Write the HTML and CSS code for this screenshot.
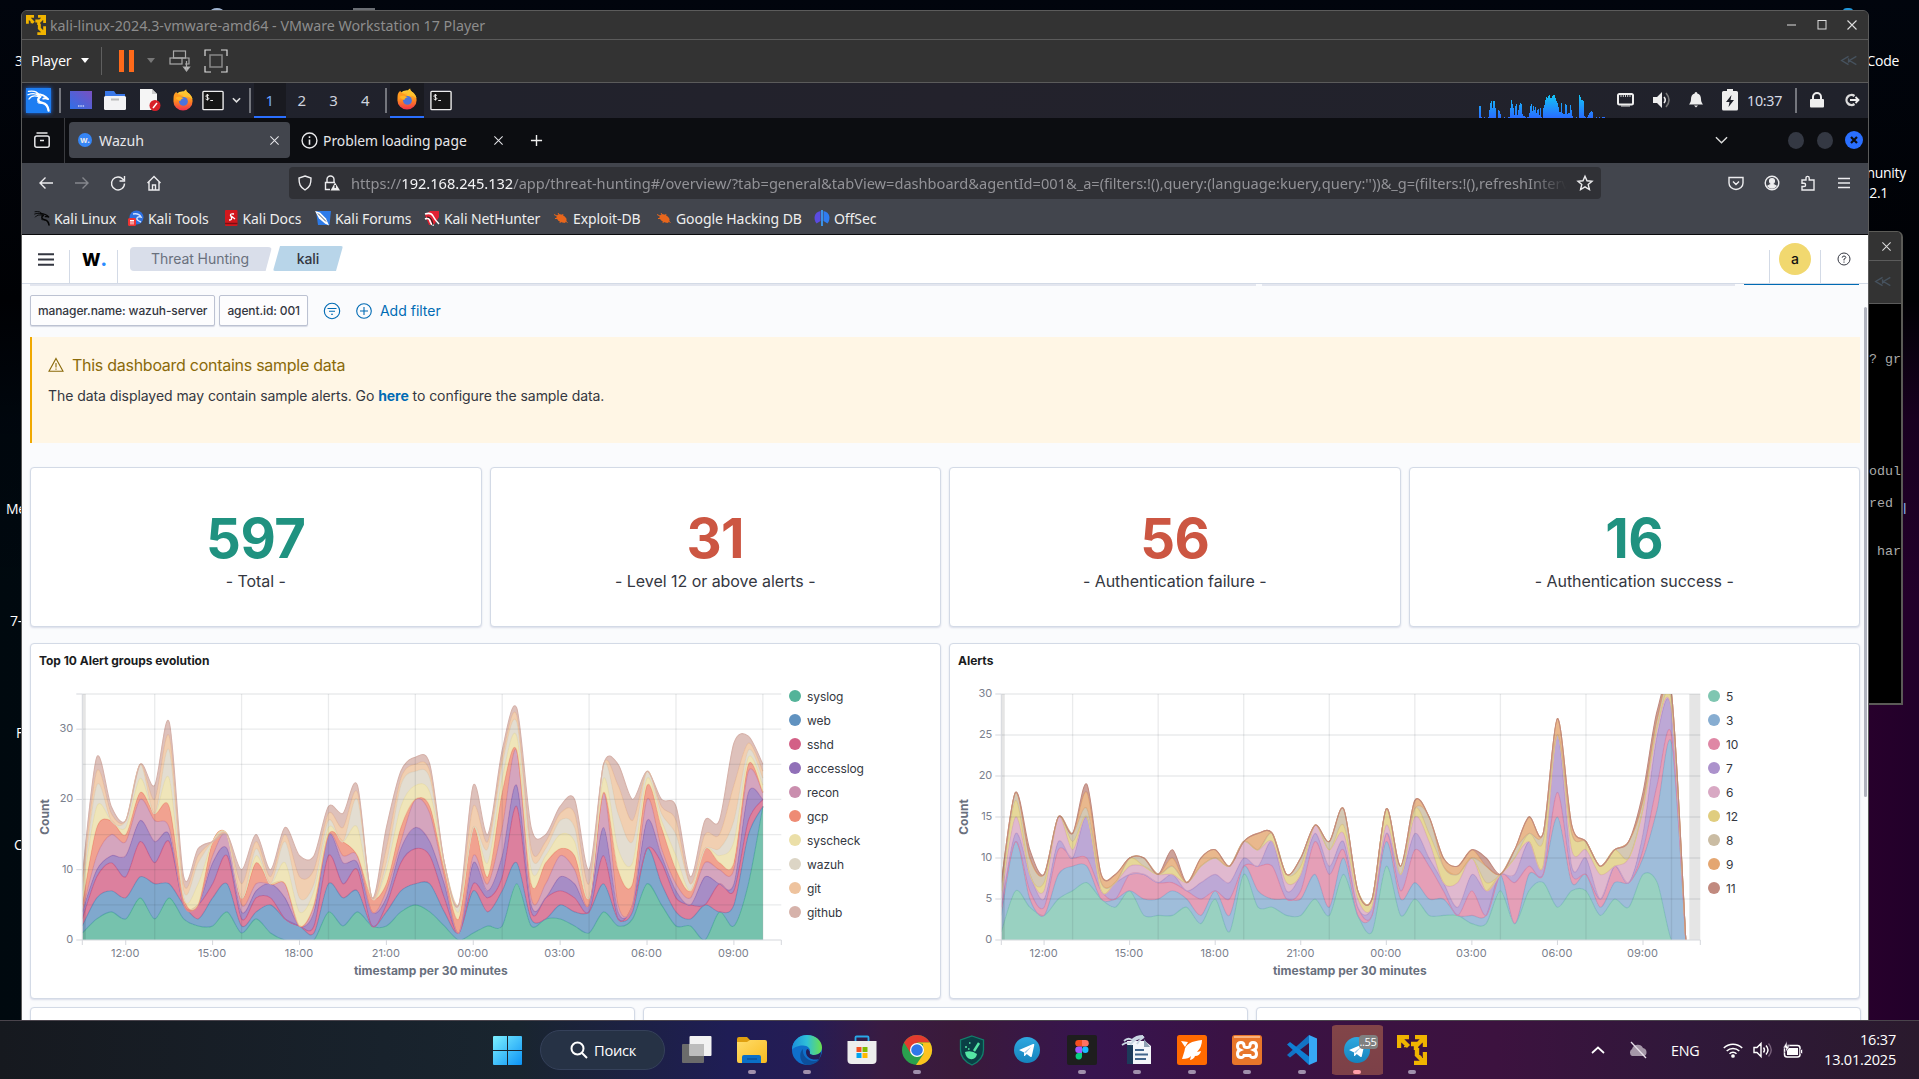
FILE: index.html
```html
<!DOCTYPE html>
<html lang="ru">
<head>
<meta charset="utf-8">
<title>kali-linux-2024.3-vmware-amd64 - VMware Workstation 17 Player</title>
<link rel="stylesheet" href="styles.css">
</head>
<body>
<svg class="defs" aria-hidden="true">
  <defs>
    <linearGradient id="gFox" x1="0" y1="0" x2="0" y2="1"><stop offset="0" stop-color="#ffd43a"/><stop offset=".5" stop-color="#ff8a1f"/><stop offset="1" stop-color="#f0304e"/></linearGradient>
    <linearGradient id="gCpu" x1="0" y1="0" x2="0" y2="24" gradientUnits="userSpaceOnUse"><stop offset="0" stop-color="#12c8f4"/><stop offset="1" stop-color="#2a6cff"/></linearGradient>
    <linearGradient id="gWin" x1="0" y1="0" x2="1" y2="1"><stop offset="0" stop-color="#7cf0ff"/><stop offset="1" stop-color="#0c93f5"/></linearGradient>
    <linearGradient id="gEdge" x1="0" y1="0" x2="1" y2="0"><stop offset="0" stop-color="#1b8fdc"/><stop offset=".5" stop-color="#2fc0d8"/><stop offset="1" stop-color="#6be04c"/></linearGradient>
    <linearGradient id="gTg" x1="0" y1="0" x2="0" y2="1"><stop offset="0" stop-color="#2fa8e0"/><stop offset="1" stop-color="#1583bd"/></linearGradient>
    <linearGradient id="gDesk" x1="0" y1="1" x2="1" y2="0"><stop offset="0" stop-color="#2f6fe8"/><stop offset="1" stop-color="#7a50c0"/></linearGradient>
    <linearGradient id="gFold" x1="0" y1="0" x2="1" y2="1"><stop offset="0" stop-color="#ffdc6a"/><stop offset="1" stop-color="#f8bb1f"/></linearGradient>
  </defs>
  <symbol id="vmware" viewBox="0 0 30 30"><g fill="none" stroke="#f0b400" stroke-width="4.4"><path d="M2 13V2h10M18 2h10v10M28 17v11H17M3 3l8.500 8.500M27 3l-8 8M27 27l-8-8M7 10h3M14 9h5v6M20 13v8"/></g></symbol>
  <symbol id="firefox" viewBox="0 0 24 24"><circle cx="12" cy="13" r="10.5" fill="url(#gFox)"/><path d="M13 9C11 6 12 2 15.500.5c0 4 6 5 7 11-3-3-6-4-9.500-2.500z" fill="#ffc42e"/><path d="M2 12C1 7 3 4 5 3c0 2 1 3 3 3l5 3z" fill="#ff9a20"/><circle cx="12.500" cy="13.500" r="4.800" fill="#4b73dc"/><path d="M4 9.500c3-2 6-1 9 .5-2 0-3 1-4 3-2-.5-4-1.500-5-3.500z" fill="#ffb525"/></symbol>
  <symbol id="terminal" viewBox="0 0 24 22"><rect x="1" y="1" width="22" height="20" rx="1" fill="#161616" stroke="#eee" stroke-width="1.500"/><path d="M7.500 5.500C6 4.500 4 5 4.300 6.400S7.700 7.700 7.500 9 5 10.300 4 9.300M5.900 4v7M9 11h3" fill="none" stroke="#fff" stroke-width="1"/></symbol>
  <symbol id="dragon" viewBox="0 0 24 24"><g fill="none" stroke="currentColor" stroke-linecap="round"><path d="M1.500 2.500C7 1.500 11 3 13 6.500M1 6c5-2 9-1.500 12 1.500M2 10.500C4 7.500 8 6.500 12 8" stroke-width="1.300"/><path d="M10 5.500c6 0 9 1.500 12 5M22 10.500c-2-1-3.500-1-5-.5" stroke-width="2"/><path d="M14 8c-4 3-2.500 5.500 2 6.500s6 4 6.500 8" stroke-width="2.400"/><path d="M16 15c-2-.5-4 .5-5-1" stroke-width="1"/></g></symbol>
  <symbol id="close" viewBox="0 0 12 12"><path d="M1.500 1.500l9 9M10.500 1.500l-9 9" stroke="currentColor" stroke-width="1.100" fill="none"/></symbol>
  <symbol id="rewind" viewBox="0 0 18 12"><path d="M8.500 1.500L1 6l7.500 4.500M8.500 3.500v5M17 1.500L9.500 6l7.500 4.500" fill="none" stroke="#46525e" stroke-width="1.500"/></symbol>
  <symbol id="telegram" viewBox="0 0 26 26"><circle cx="13" cy="13" r="13" fill="url(#gTg)"/><path d="M5 13l14-6c1-.3 1.500.2 1.200 1.200l-2.400 11c-.2.900-.8 1-1.500.6l-3.600-2.700-1.900 1.800c-.5.400-.8.200-.8-.4l.1-3z" fill="#fff"/><path d="M10.200 15.300l7-5.600-5.300 6.300z" fill="#9ac8e4"/></symbol>
  <symbol id="bug" viewBox="0 0 16 16"><ellipse cx="8.500" cy="8.500" rx="5.500" ry="3.600" transform="rotate(30 8.500 8.500)" fill="#e8661c"/><path d="M1 4.500l4 2M5 3l2 3M2 8.500h3M7 13l.5-2M12 13l-1-2M10 4L9 6.500M14.500 12.500l-2-1.500" stroke="#e8661c" stroke-width="1"/></symbol>
</svg>

<div class="desktop">
  <span class="desk-label d1">3</span><span class="desk-label d2">Me</span><span class="desk-label d3">7-</span><span class="desk-label d4">F</span><span class="desk-label d5">C</span>
  <span class="desk-label d6">Code</span><span class="desk-label d7">nunity</span><span class="desk-label d8">.2.1</span><span class="desk-label d9">l</span>
  <i class="peek p1"></i><i class="peek p2"></i><i class="peek p3"></i>

  <section class="window back-window">
    <div class="titlebar"><svg class="i12"><use href="#close"/></svg></div>
    <div class="toolbar"><svg class="rew"><use href="#rewind"/></svg></div>
    <div class="console"><p class="c1">? gr</p><p class="c2">odul</p><p class="c3">red&nbsp;</p><p class="c4">har</p></div>
  </section>

  <section class="window main-window">
    <header class="titlebar">
      <svg class="vm-logo"><use href="#vmware"/></svg>
      <span class="title">kali-linux-2024.3-vmware-amd64 - VMware Workstation 17 Player</span>
      <div class="win-controls">
        <svg viewBox="0 0 12 12"><path d="M1 6h9" stroke="#ddd"/></svg>
        <svg viewBox="0 0 12 12"><rect x="2" y="1.500" width="8" height="8.500" fill="none" stroke="#ddd"/></svg>
        <svg viewBox="0 0 12 12"><use href="#close"/></svg>
      </div>
    </header>
    <div class="toolbar">
      <span class="player">Player</span><i class="tri white"></i><i class="tb-sep"></i>
      <i class="pause"></i><i class="tri grey"></i>
      <svg class="cad" viewBox="0 0 22 22" fill="none" stroke="#aaa" stroke-width="1.200"><rect x="4.500" y="1" width="12" height="7"/><rect x="1" y="8" width="12" height="6"/><path d="M13 8h7v6h-4"/><path d="M17.500 11v9M14.500 17l3 4 3-4z" fill="#ccc"/></svg>
      <svg class="full" viewBox="0 0 24 24" fill="none"><path d="M1 7V1h6M17 1h6v6M23 17v6h-6M7 23H1v-6" stroke="#ddd" stroke-width="1.200"/><rect x="6" y="6" width="12" height="12" stroke="#888" stroke-width="1.500"/></svg>
      <svg class="rew end"><use href="#rewind"/></svg>
    </div>

    <div class="panel">
      <span class="kali"><svg><use href="#dragon"/></svg></span><i class="psep s1"></i>
      <svg class="pi desk" viewBox="0 0 22 18"><rect width="22" height="18" fill="url(#gDesk)"/><path d="M8 15h1.500M10.300 15h1.500M12.600 15h1.500" stroke="#fff"/></svg>
      <svg class="pi fold" viewBox="0 0 22 22"><path d="M1 2h9l2 3h9v6H1z" fill="#3a78e8"/><rect y="7" width="22" height="14" rx="1.500" fill="#f3f3f5"/><path d="M7 10.500h8" stroke="#bbb" stroke-width="2"/></svg>
      <svg class="pi doc" viewBox="0 0 21 22"><path d="M0 0h12l5 5v16H0z" fill="#f5f5f5"/><path d="M12 0l5 5h-5z" fill="#ccc"/><circle cx="15" cy="16.500" r="5.500" fill="#d8202a"/><path d="M13 19l4-5" stroke="#fff" stroke-width="1.500"/></svg>
      <svg class="pi fox"><use href="#firefox"/></svg>
      <svg class="pi term"><use href="#terminal"/></svg>
      <svg class="pi chev" viewBox="0 0 10 6"><path d="M1 1l4 4 4-4" fill="none" stroke="#ddd" stroke-width="1.800"/></svg><i class="psep s2"></i>
      <span class="ws on">1</span><span class="ws">2</span><span class="ws">3</span><span class="ws">4</span><i class="psep s3"></i>
      <span class="task on"><svg class="pi"><use href="#firefox"/></svg></span>
      <svg class="pi term2"><use href="#terminal"/></svg>
      <div class="panel-tray">
        <svg class="cpu" id="cpu" viewBox="0 0 128 24"></svg>
        <svg class="t-eth" viewBox="0 0 17 14"><rect x="1" y="1" width="15" height="10.500" rx="1.500" fill="none" stroke="#eee" stroke-width="2"/><path d="M4 2v2M6.300 2v2M8.500 2v2M10.700 2v2M13 2v2" stroke="#ccc" stroke-width="1"/><path d="M4 13h9" stroke="#ddd"/></svg>
        <svg class="t-vol" viewBox="0 0 18 18"><path d="M0 6h4l5-5v16l-5-5H0z" fill="#eee"/><path d="M11 6q2.500 3 0 6" stroke="#eee" stroke-width="1.600" fill="none"/><path d="M13 2q6 7 0 14" stroke="#777" stroke-width="1.600" fill="none"/></svg>
        <svg class="t-bell" viewBox="0 0 14 16"><path d="M7 0c1 0 1.300.8 1.300 1.500C11 2.200 12 4.500 12 7c0 3 1 4 2 5.500H0C1 11 2 10 2 7c0-2.500 1-4.800 3.700-5.500C5.700.8 6 0 7 0zM5 13.500h4L7 15.500z" fill="#eee"/></svg>
        <svg class="t-bat" viewBox="0 0 16 22"><path d="M5 0h6v2h3.500q1.500 0 1.500 1.500V20q0 1.500-1.500 1.500h-13Q0 21.500 0 20V3.500Q0 2 1.500 2H5z" fill="#eee"/><path d="M9.500 6L4 13h3.500L6.500 18l5.500-7H8.500z" fill="#20222b"/></svg>
        <span class="t-time">10:37</span><i class="psep s4"></i>
        <svg class="t-lock" viewBox="0 0 14 16"><rect y="7" width="14" height="8.500" rx="1" fill="#eee"/><path d="M3 8V5a4 4 0 018 0v3" fill="none" stroke="#eee" stroke-width="2"/></svg>
        <svg class="t-out" viewBox="0 0 15 14"><path d="M10.500 3A5 5 0 1010.500 11" fill="none" stroke="#ddd" stroke-width="2.300"/><path d="M6 7h8M11.500 4l3 3-3 3" stroke="#eee" stroke-width="1.800" fill="none"/></svg>
      </div>
    </div>

    <div class="tabs">
      <span class="archive"><svg viewBox="0 0 16 16" fill="none" stroke="#e8e8ea" stroke-width="1.500"><path d="M2.500 1h11"/><rect x=".8" y="4" width="14.400" height="11.200" rx="2"/><path d="M6 8.500h4"/></svg></span>
      <div class="tab active"><span class="fav">w.</span><span class="tab-name">Wazuh</span><svg class="x"><use href="#close"/></svg></div>
      <div class="tab second"><svg class="info" viewBox="0 0 16 16"><circle cx="8" cy="8" r="7" fill="none" stroke="#e8e8ea" stroke-width="1.300"/><path d="M8 7v5M8 4v1.600" stroke="#e8e8ea" stroke-width="1.500"/></svg><span class="tab-name">Problem loading page</span><svg class="x"><use href="#close"/></svg></div>
      <svg class="plus" viewBox="0 0 14 14"><path d="M7 1v12M1 7h12" stroke="#eee" stroke-width="1.500"/></svg>
      <div class="tab-end">
        <svg class="tchev" viewBox="0 0 14 8"><path d="M1 1l6 6 6-6" fill="none" stroke="#ddd" stroke-width="1.500"/></svg>
        <i class="dot"></i><i class="dot"></i><i class="dot blue"><svg viewBox="0 0 8 8"><path d="M1 1l6 6M7 1L1 7" stroke="#0c0d11" stroke-width="2.200"/></svg></i>
      </div>
    </div>

    <div class="nav">
      <svg class="n n1" viewBox="0 0 16 16"><path d="M15 8H2M7.500 2.500L2 8l5.500 5.500" /></svg>
      <svg class="n n2" viewBox="0 0 16 16"><path d="M1 8h13M8.500 2.500L14 8l-5.500 5.500"/></svg>
      <svg class="n n3" viewBox="0 0 16 16"><path d="M13.500 5A6.500 6.500 0 1014.500 8.500M14.500 1v5H9.500"/></svg>
      <svg class="n n4" viewBox="0 0 16 16"><path d="M1.500 8L8 1.500 14.500 8M3 7v8h10V7M6.500 15v-5h3v5"/></svg>
      <div class="urlbar">
        <svg class="n u1" viewBox="0 0 16 16"><path d="M8 1l6 2c0 6-1 9-6 12-5-3-6-6-6-12z"/></svg>
        <svg class="n u2" viewBox="0 0 16 16"><path d="M3 7V4.500a3.500 3.500 0 017 0V7M6 14.500H1.500V7.500H11"/><path d="M11 7.500l5 8H6.500z" fill="#eee" stroke="none"/><path d="M11.200 10v3" stroke="#303136" /></svg>
        <span class="url">https://<b>192.168.245.132</b>/app/threat-hunting#/overview/?tab=general&amp;tabView=dashboard&amp;agentId=001&amp;_a=(filters:!(),query:(language:kuery,query:''))&amp;_g=(filters:!(),refreshInterv</span>
        <svg class="n star" viewBox="0 0 16 16"><path d="M8 1.200l2 4.600 5 .4-3.800 3.300 1.200 5L8 11.800l-4.400 2.700 1.200-5L1 6.200l5-.4z"/></svg>
      </div>
      <div class="nav-end">
        <svg class="n" viewBox="0 0 16 16"><path d="M1 2.500h14V8A7 6.500 0 011 8zM5 6.500l3 3 3-3"/></svg>
        <svg class="n" viewBox="0 0 16 16"><circle cx="8" cy="8" r="6.800"/><circle cx="8" cy="6" r="2.400" fill="#eee"/><path d="M4 11q4-3 8 0-4 4-8 0z" fill="#eee"/></svg>
        <svg class="n" viewBox="0 0 16 16"><path d="M6 5V3a1.600 1.600 0 013.200 0V5H14v10H2v-3.500h2a1.500 1.500 0 000-3.200H2V5z"/></svg>
        <svg class="n" viewBox="0 0 16 16"><path d="M2 3.500h12M2 8h12M2 12.500h12"/></svg>
      </div>
    </div>

    <div class="bookmarks">
      <span class="bm b1"><svg class="black"><use href="#dragon"/></svg>Kali Linux</span>
      <span class="bm b2"><svg viewBox="0 0 16 16"><circle cx="8.500" cy="7.500" r="7" fill="#2c6fe0"/><path d="M5 4q6-1 8 3-3-1-4 1t4 4" stroke="#cfe0ff" stroke-width="1.500" fill="none"/><rect y="8" width="8" height="8" rx="1.500" fill="#e33"/><path d="M2 10.500h4M3 10v4.500M5 10v4.500" stroke="#fff"/></svg>Kali Tools</span>
      <span class="bm b3"><svg viewBox="0 0 16 16"><rect x="2" y="0" width="12.500" height="16" rx="1" fill="#d3171c"/><path d="M2 13.500h12.500" stroke="#7b1014" stroke-width="1.500"/><path d="M11 4Q6 3 8 6.500T6 10M7 5l5 4" stroke="#fff" stroke-width="1.300" fill="none"/></svg>Kali Docs</span>
      <span class="bm b4"><svg viewBox="0 0 16 16"><path d="M1 1h15l-1.500 14H3z" fill="#2d7be8"/><path d="M0 1l5 1.500 6 6 3 7-4-2-6-5z" fill="#fff"/><path d="M3 3.500l8 8" stroke="#456" /></svg>Kali Forums</span>
      <span class="bm b5"><svg viewBox="0 0 16 16"><path d="M1 5l5-4h9v6l-5 8H5z" fill="#df2233"/><path d="M1 4q6-2 8 2t6 8M1 9q4-2 5 2t4 4" stroke="#fff" stroke-width="1.600" fill="none"/><path d="M3 7q5 0 6 8" stroke="#222" stroke-width="1.200" fill="none"/></svg>Kali NetHunter</span>
      <span class="bm b6"><svg><use href="#bug"/></svg>Exploit-DB</span>
      <span class="bm b7"><svg><use href="#bug"/></svg>Google Hacking DB</span>
      <span class="bm b8"><svg viewBox="0 0 16 16"><path d="M6.500 1C0 2-1 9 2.500 13.500L6.500 11z" fill="#5a4be0"/><path d="M9.500 1C16 2 17 9 13.500 13.500L9.500 11z" fill="#2f7cf0"/><path d="M8 0v16" stroke="#3d9bf5" stroke-width="1.800"/></svg>OffSec</span>
    </div>

    <main class="page">
      <header class="wz-header">
        <svg class="burger" viewBox="0 0 16 13"><path d="M0 1.200h16M0 6.500h16M0 11.800h16" stroke="#343741" stroke-width="2"/></svg>
        <i class="vsep v1"></i><span class="wlogo">W<b>.</b></span><i class="vsep v2"></i>
        <nav class="crumbs"><span class="crumb first">Threat Hunting</span><span class="crumb last">kali</span></nav>
        <div class="wz-end"><i class="vsep"></i><span class="avatar">a</span><i class="vsep"></i>
          <svg class="help" viewBox="0 0 14 14"><circle cx="7" cy="7" r="6" fill="none" stroke="#343741"/><path d="M5.200 5.700Q5.300 4 7 4t1.800 1.500Q8.800 6.500 7 7v1.500M7 9.500v1.200" fill="none" stroke="#343741"/></svg></div>
      </header>
      <div class="scrolled"><i class="sc1"></i><i class="sc2"></i><i class="sc3"></i></div>
      <div class="filters">
        <span class="pill">manager.name: wazuh-server</span><span class="pill">agent.id: 001</span>
        <svg class="f-ico" viewBox="0 0 18 18"><circle cx="9" cy="9" r="7.700"/><path d="M4.500 6.500h9M6 9.300h6M8 12.200h2"/></svg>
        <svg class="f-ico f-add" viewBox="0 0 18 18"><circle cx="9" cy="9" r="7.300"/><path d="M9 5v8M5 9h8"/></svg>
        <a class="add">Add filter</a>
      </div>
      <section class="callout">
        <h2><svg viewBox="0 0 16 16"><path d="M8 1.500L15 14.300H1zM8 6v4.500M8 11.500v1.300" fill="none" stroke="#8a6a0a" stroke-width="1.100"/></svg>This dashboard contains sample data</h2>
        <p>The data displayed may contain sample alerts. Go <a>here</a> to configure the sample data.</p>
      </section>
      <section class="metrics">
        <div class="card green"><strong>597</strong><span>- Total -</span></div>
        <div class="card red"><strong>31</strong><span>- Level 12 or above alerts -</span></div>
        <div class="card red"><strong>56</strong><span>- Authentication failure -</span></div>
        <div class="card green"><strong>16</strong><span>- Authentication success -</span></div>
      </section>
      <section class="charts">
        <div class="card chart"><h3>Top 10 Alert groups evolution</h3><div class="plot"><svg id="groups" width="750" height="312"></svg><ul class="legend" id="groupsLegend"></ul></div></div>
        <div class="card chart"><h3>Alerts</h3><div class="plot"><svg id="alerts" width="750" height="312"></svg><ul class="legend" id="alertsLegend"></ul></div></div>
      </section>
      <section class="lower"><div class="card"></div><div class="card"></div><div class="card"></div></section>
      <i class="scrollbar"></i>
    </main>
  </section>
</div>

<footer class="taskbar">
  <svg class="start" viewBox="0 0 29 29"><path d="M0 1q0-1 1-1h13v14H0zM15 0h13q1 0 1 1v13H15zM0 15h14v14H1q-1 0-1-1zM15 15h14v13q0 1-1 1H15z" fill="url(#gWin)"/></svg>
  <div class="search"><svg viewBox="0 0 18 18"><circle cx="7.500" cy="7.500" r="6" fill="none" stroke="#fff" stroke-width="2"/><path d="M12 12l5 5" stroke="#fff" stroke-width="2"/></svg>Поиск</div>
  <div class="apps">
    <span class="app"><svg viewBox="0 0 30 30"><rect x="0" y="9" width="22" height="19" rx="1" fill="#6b6b6b"/><rect x="7.500" y="1" width="22" height="20" rx="1" fill="#f2f2f2"/><rect x="7.500" y="9" width="14.500" height="12" fill="#bdbdbd"/></svg></span>
    <span class="app run"><svg viewBox="0 0 30 30"><path d="M0 4q0-2 2-2h8l3 3H28v8H0z" fill="#e0a010"/><path d="M0 7h10l3-2h15q2 0 2 2v19q0 2-2 2H2q-2 0-2-2z" fill="url(#gFold)"/><path d="M5 28v-6q0-2 2-2h15q2 0 2 2v6z" fill="#0a6fc8"/><path d="M10 24h10" stroke="#0a4a90" stroke-width="1.200"/></svg></span>
    <span class="app run"><svg viewBox="0 0 30 30"><circle cx="15" cy="15" r="15" fill="#0f6fcb"/><path d="M0 15C0 6 7 0 15 0c9 0 15 6 15 12.500 0 5-4 7.500-8 7.500-3 0-5-1-4-3 1-3-2-6.500-7-6.500C5 10.500 1 13 0 15z" fill="url(#gEdge)"/><path d="M11 14c-1 6 4 12 11 12 3 0 5-1 6-2-3 4-8 6-13 6-7-1-9-12-4-16z" fill="#0d4f9c"/><path d="M18 17c-1 2 1 3 4 3s5-1 7-3c0 3-1 5-2 7-6 2-13-1-13-7 0-2 1-3 2-3z" fill="#241d58"/></svg></span>
    <span class="app"><svg viewBox="0 0 30 30"><path d="M8.500 8V2.500q0-1 1-1h11q1 0 1 1V8" fill="none" stroke="#29a8e8" stroke-width="1.800"/><path d="M.5 6h29v19q0 4-4 4h-21q-4 0-4-4z" fill="#ededed"/><path d="M9.500 12h5v5h-5z" fill="#f25022"/><path d="M15.500 12h5v5h-5z" fill="#7fba00"/><path d="M9.500 18h5v5h-5z" fill="#00a4ef"/><path d="M15.500 18h5v5h-5z" fill="#ffb900"/></svg></span>
    <span class="app run"><svg viewBox="0 0 30 30"><circle cx="15" cy="15" r="15" fill="#2aa04e"/><path d="M2 7.500A15 15 0 0128 7.500H15L8.500 18z" fill="#e33b2e"/><path d="M28 7.500A15 15 0 0114 30l7.500-11L21 9 15 7.500z" fill="#fcc31e"/><circle cx="15" cy="15" r="7" fill="#fff"/><circle cx="15" cy="15" r="5.800" fill="#2f78ea"/></svg></span>
    <span class="app"><svg viewBox="0 0 30 30"><path d="M15 1l11.500 4v10c0 7-5 12-11.500 15C8.500 27 3.500 22 3.500 15V5z" fill="#0a3f45" stroke="#12806c" stroke-width="1.300"/><path d="M8 17q7-2 12 2-1 6-7 5-4-1-5-7z" fill="#55e6a5"/><path d="M22 8l-5 8" stroke="#55e6a5" stroke-width="2.400"/><path d="M8 12h2M12 8h1.500M11 14h1.500" stroke="#55e6a5" stroke-width="1.500"/></svg></span>
    <span class="app"><svg class="tg"><use href="#telegram"/></svg></span>
    <span class="app run"><svg viewBox="0 0 30 30"><rect width="30" height="30" rx="2" fill="#1e1e1e"/><path d="M15 5h-3.500a3.200 3.200 0 000 6.500H15z" fill="#f24e1e"/><path d="M15 5h3.500a3.200 3.200 0 010 6.500H15z" fill="#ff7262"/><path d="M15 11.500h-3.500a3.200 3.200 0 000 6.500H15z" fill="#a259ff"/><circle cx="18.300" cy="14.800" r="3.200" fill="#1abcfe"/><path d="M15 18h-3.500a3.200 3.200 0 103.500 3.200z" fill="#0acf83"/></svg></span>
    <span class="app run"><svg viewBox="0 0 30 30"><path d="M5 6h18l6 5v18H6z" fill="#f3f6fa"/><path d="M5 10h6v19H5z" fill="#1c3a5a"/><path d="M22 4l6 8h-6z" fill="#8fa1b4"/><path d="M13 15h9M13 19.500h13M13 24h11" stroke="#41658c" stroke-width="1.800"/><path d="M0 10q6-4 9-1 4-6 13-7-5 3-7 7M2 6q4-4 8-1 4-4 11-4" fill="none" stroke="#c9d6e2" stroke-width="1.800"/></svg></span>
    <span class="app run"><svg viewBox="0 0 30 30"><rect width="30" height="30" rx="2.500" fill="#ff6a00"/><path d="M25 5C15 6 8 9 7.500 16L5 24q7 0 9-3l-1 4q4-1 5-4 5 0 6-5l-4 1q5-5 5-12zM4 6l7 1-3 5z" fill="#fff"/></svg></span>
    <span class="app run"><svg viewBox="0 0 30 30"><rect width="30" height="30" rx="3" fill="#e8762a"/><path d="M2 2h26" stroke="#ffc79a" stroke-width="1.500"/><path d="M9 7.500q-3.500 0-3.500 3.500 0 3 2.500 4-2.500 1-2.500 4 0 3.500 3.500 3.500 2.500 0 3-2h6q.5 2 3 2 3.500 0 3.500-3.500 0-3-2.500-4 2.500-1 2.500-4 0-3.500-3.500-3.500-3 0-3 3 0 2-3 2t-3-2q0-3-3-3z" fill="none" stroke="#fff" stroke-width="3"/></svg></span>
    <span class="app run"><svg viewBox="0 0 30 30"><path d="M22 0L0 20l3 2.500L22 8z" fill="#1373c4"/><path d="M0 9.500L3 7l19 14.500V30z" fill="#0f7fd4"/><path d="M22 0l8 3.500v23L22 30z" fill="#37a8f5"/></svg></span>
    <span class="app run hot"><svg class="tg"><use href="#telegram"/></svg><em>..55</em></span>
    <span class="app run"><svg viewBox="0 0 30 30"><use href="#vmware"/></svg></span>
  </div>
  <div class="tray">
    <svg class="y1" viewBox="0 0 14 8"><path d="M1 7l6-5.500L13 7" fill="none" stroke="#fff" stroke-width="1.700"/></svg>
    <svg class="y2" viewBox="0 0 20 16"><path d="M4 14a4 4 0 010-7 6 6 0 0111-1 4.200 4.200 0 011 8z" fill="#a597a8"/><path d="M3 0l15 16" stroke="#e8e0ea" stroke-width="1.300"/></svg>
    <span class="lang">ENG</span>
    <svg class="y3" viewBox="0 0 20 16" fill="none" stroke="#fff" stroke-width="1.500"><path d="M.8 6a13 13 0 0118.400 0M3.700 9a9 9 0 0112.600 0M6.500 11.800a5 5 0 017 0"/><circle cx="10" cy="14" r="1.100" fill="#fff"/></svg>
    <svg class="y4" viewBox="0 0 20 18" fill="none" stroke="#fff" stroke-width="1.400"><path d="M1 6.500h3l4-4v13l-4-4H1zM10.500 6.500q2 2.500 0 5M13 4.500q4 4.500 0 9"/><path d="M15.500 2.500q5.500 6.500 0 13" stroke="#77607a"/></svg>
    <svg class="y5" viewBox="0 0 20 18"><rect x="1.500" y="4.500" width="15.500" height="11.500" rx="2.500" fill="none" stroke="#fff" stroke-width="1.500"/><rect x="4" y="7" width="11" height="7" fill="#fff"/><path d="M17.500 8.500v4h2v-4zM4 0L0 7h3l-1 5 5-7H4z" fill="#fff" stroke="#30183a" stroke-width=".6"/></svg>
    <div class="clock"><span>16:37</span><span>13.01.2025</span></div>
  </div>
</footer>
<script src="charts.js"></script>
</body>
</html>
```
FILE: styles.css
```css
* { box-sizing: border-box; }
body { margin: 0; width: 1919px; height: 1079px; overflow: hidden; font-family: "Noto Sans", sans-serif; color: #fff; background: #000; }
svg { display: block; flex: none; overflow: visible; }
h2, h3, p, ul { margin: 0; padding: 0; font-weight: 400; }
i { flex: none; font-style: normal; }
.defs { position: absolute; width: 0; height: 0; }

/* desktop */
.desktop { position: relative; height: 1020px; overflow: hidden; background: linear-gradient(180deg, #01050d 0, #000104 300px, rgba(0,0,8,.3) 420px, transparent 600px), linear-gradient(90deg, #00090f 0, #00101a 50%, #28002c 97%, #22002a 100%); }
.desk-label { position: absolute; font: 14px "Open Sans", sans-serif; line-height: 20px; letter-spacing: -.3px; }
.d1 { left: 15px; top: 51px; } .d2 { left: 6px; top: 499px; } .d3 { left: 10px; top: 611px; } .d4 { left: 16px; top: 723px; } .d5 { left: 14px; top: 835px; }
.d6 { right: 20px; top: 51px; } .d7 { right: 13px; top: 163px; } .d8 { right: 31px; top: 183px; } .d9 { left: 1903px; top: 499px; color: #8fb8e8; }
.peek { position: absolute; top: 8px; height: 8px; }
.p1 { left: 210px; width: 14px; border-radius: 50%; border: 2px solid #9fb4d0; }
.p2 { left: 353px; width: 22px; background: #6a6e74; }
.p3 { left: 1843px; width: 10px; background: #2196d8; border-radius: 40%; }

/* windows */
.window { position: absolute; display: flex; flex-direction: column; border: 1px solid #5b5b5b; border-radius: 6px 6px 0 0; background: #333; overflow: hidden; }
.main-window { left: 21px; top: 10px; width: 1848px; height: 1020px; }
.back-window { left: 1500px; top: 231px; width: 403px; height: 474px; border-width: 1px 2px 2px; border-color: #5b5b57; }
.titlebar { display: flex; align-items: center; flex: none; height: 29px; border-bottom: 1px solid #5b5b5b; background: #333; }
.toolbar { display: flex; align-items: center; flex: none; height: 43px; padding-bottom: 1px; border-bottom: 1px solid #5b5b5b; background: #333; }
.back-window .titlebar, .back-window .toolbar { justify-content: flex-end; padding-right: 9px; }
.i12 { width: 11px; height: 11px; color: #ddd; }
.rew { width: 18px; height: 11px; }
.console { flex: 1; display: flex; flex-direction: column; background: #000; color: #aaa; font: bold 13.330px/16px "Liberation Mono", monospace; text-align: right; white-space: pre; }
.c1 { padding-top: 48px; } .c2 { padding-top: 96px; } .c3 { padding-top: 16px; } .c4 { padding-top: 32px; }
.vm-logo { width: 20px; height: 20px; margin-left: 4px; }
.title { margin-left: 4px; font-size: 14.270px; color: #8d8d8d; white-space: nowrap; }
.win-controls { display: flex; gap: 18px; margin-left: auto; padding-right: 10px; color: #ddd; }
.win-controls svg { width: 12px; height: 12px; }
.player { width: 48px; margin-left: 9px; font: 14.500px "Open Sans", sans-serif; letter-spacing: -.2px; }
.tri { border: 4.500px solid transparent; border-top: 5.500px solid #fff; border-bottom: 0; margin-left: 2px; }
.tb-sep { width: 1px; height: 28px; margin-left: 12px; background: #5f5f5f; }
.pause { width: 15px; height: 22px; margin-left: 17px; border: solid #ff6a1a; border-width: 0 5px; }
.tri.grey { margin-left: 13px; border-top-color: #777; }
.cad { width: 22px; height: 22px; margin-left: 14px; }
.full { width: 24px; height: 24px; margin-left: 13px; }
.rew.end { margin-left: auto; margin-right: 10px; }

/* xfce panel */
.panel { display: flex; align-items: center; flex: none; height: 35px; padding-bottom: 1px; background: linear-gradient(90deg, #1f222c, #23222c 50%, #20222b); font-size: 15px; color: #cfd3de; }
.kali { width: 25px; height: 25px; margin-left: 4px; padding: 1px; background: #1d7df2; color: #fff; box-shadow: 0 0 4px #1d6ef0; }
.kali svg { width: 23px; height: 23px; }
.psep { width: 2px; height: 25px; background: #74767d; }
.s1 { margin-left: 8px; }
.pi { width: 22px; height: 22px; }
.pi.desk { height: 18px; margin-left: 9px; }
.pi.fold { margin-left: 12px; }
.pi.doc { width: 21px; margin-left: 14px; }
.pi.fox { margin-left: 11px; }
.pi.term, .pi.term2 { height: 21px; margin-left: 8px; }
.pi.chev { width: 9px; height: 6px; margin-left: 8px; }
.s2 { margin-left: 8px; margin-right: 3px; }
.ws { width: 31.800px; height: 35px; line-height: 34px; text-align: center; }
.ws.on, .task.on { background: #191a20; border-bottom: 2px solid #2a6fff; color: #6fa5ff; }
.s3 { margin: 0 3px 0 4px; }
.task { display: flex; align-items: center; justify-content: center; width: 34px; height: 35px; }
.pi.term2 { margin-left: 6px; }
.panel-tray { display: flex; align-items: center; height: 35px; margin-left: auto; }
.cpu { width: 128px; height: 24px; align-self: flex-end; }
.t-eth { width: 17px; height: 14px; margin-left: 10px; }
.t-vol { width: 18px; height: 18px; margin-left: 19px; }
.t-bell { width: 14px; height: 16px; margin-left: 18px; }
.t-bat { width: 16px; height: 22px; margin-left: 19px; }
.t-time { width: 47px; padding-left: 9px; font-size: 14.300px; letter-spacing: -.3px; color: #d6dae4; }
.s4 { margin-left: 10px; }
.t-lock { width: 14px; height: 16px; margin-left: 13px; }
.t-out { width: 15px; height: 14px; margin: 0 9px 0 20px; }

/* firefox */
.tabs { display: flex; align-items: center; flex: none; height: 45px; padding-bottom: 1px; background: #0c0d11; font-size: 13.850px; color: #e6e6ea; }
.archive { display: flex; align-items: center; width: 43px; height: 45px; padding-left: 12px; border-right: 1px solid #3a3b40; }
.archive svg { width: 16px; height: 16px; }
.tab { display: flex; align-items: center; height: 36px; border-radius: 4px; }
.tab.active { width: 221px; margin-left: 4px; padding-left: 9px; background: #42454d; }
.fav { width: 14px; height: 14px; border-radius: 50%; background: #3585f5; font: bold 9px/13px Inter, sans-serif; text-align: center; }
.tab.active .tab-name { margin-left: 7px; font-size: 14.200px; }
.x { width: 11px; height: 11px; margin-left: auto; }
.tab.active .x { margin-right: 10px; }
.tab.second { width: 204px; padding-left: 11px; }
.info { width: 17px; height: 17px; }
.second .tab-name { margin-left: 5px; white-space: nowrap; }
.second .x { margin-right: -10px; }
.plus { width: 13px; height: 13px; margin-left: 36px; }
.tab-end { display: flex; align-items: center; margin-left: auto; padding-right: 5px; }
.tchev { width: 13px; height: 8px; margin-right: 60px; }
.dot { display: flex; align-items: center; justify-content: center; width: 16px; height: 17px; margin-right: 13px; border-radius: 50%; background: #343843; }
.dot.blue { width: 18px; height: 18px; margin-left: -1px; margin-right: 0; background: #2a6fff; }
.dot svg { width: 8px; height: 8px; }
.nav { display: flex; align-items: center; flex: none; height: 40px; background: #42454d; }
.n { width: 16px; height: 16px; fill: none; stroke: #ececee; stroke-width: 1.400; }
.n1 { margin-left: 16px; } .n2 { margin-left: 20px; opacity: .4; } .n3 { margin-left: 20px; } .n4 { margin-left: 20px; }
.urlbar { display: flex; align-items: center; width: 1312px; height: 32px; margin-left: 127px; padding: 0 8px; border-radius: 4px; background: #303136; }
.u2 { margin-left: 11px; }
.url { flex: 1; min-width: 0; margin: 0 10px 0 11px; font-size: 14.600px; color: #929297; white-space: nowrap; -webkit-mask-image: linear-gradient(90deg, #000 97%, transparent); mask-image: linear-gradient(90deg, #000 97%, transparent); }
.url b { font-weight: 400; color: #f4f4f6; }
.nav-end { display: flex; gap: 20px; margin-left: auto; padding-right: 16px; }
.bookmarks { display: flex; align-items: center; flex: none; height: 32px; padding: 0 0 1px 12px; background: #42454d; border-bottom: 1px solid #0a0a0c; font-size: 14px; color: #eee; }
.bm { display: flex; align-items: center; gap: 4px; flex: none; white-space: nowrap; letter-spacing: -.08px; }
.bm svg { width: 16px; height: 16px; }
.bm .black { color: #050505; }
.b1 { width: 94px; } .b2 { width: 94.500px; } .b3 { width: 92.500px; } .b4 { width: 109px; } .b5 { width: 129px; } .b6 { width: 103px; } .b7 { width: 158px; }

/* dashboard */
.page { position: relative; flex: 1; min-height: 0; overflow: hidden; background: #fafbfd; color: #343741; font-family: Inter, sans-serif; }
.wz-header { display: flex; align-items: center; height: 49px; background: #fff; border-bottom: 1px solid #d3dae6; }
.burger { width: 16px; height: 13px; margin-left: 16px; }
.vsep { width: 1px; height: 33px; align-self: flex-end; background: #d3dae6; }
.v1 { margin-left: 15px; }
.wlogo { width: 47px; padding-left: 12px; font-size: 17.500px; font-weight: 800; color: #000; }
.wlogo b { color: #2a8bff; }
.crumbs { display: flex; align-items: flex-end; height: 26px; margin-left: 12px; margin-top: -2px; font-size: 14px; letter-spacing: -.05px; }
.crumb { text-align: center; }
.crumb.first { width: 142px; height: 24px; padding-right: 2px; line-height: 24px; background: #d9deea; border-radius: 4px; color: #69707d; clip-path: polygon(0 0, 100% 0, 95.500% 100%, 0 100%); }
.crumb.last { width: 70px; height: 25px; line-height: 26px; margin-left: 1px; font-weight: 500; background: #b8d5e9; border-radius: 2px; clip-path: polygon(10% 0, 100% 0, 90% 100%, 0 100%); }
.wz-end { display: flex; align-items: center; height: 48px; margin-left: auto; padding-right: 17px; }
.avatar { width: 32px; height: 32px; margin: 0 9px; border-radius: 50%; background: #f1d86f; color: #111; text-align: center; font-size: 14px; font-weight: 500; line-height: 32px; }
.help { width: 14px; height: 14px; margin-left: 16px; }
.scrolled { display: flex; height: 11px; padding-left: 8px; }
.scrolled i { height: 2px; background: #e3e6ef; }
.sc1 { width: 1226px; } .sc2 { width: 473px; margin-left: 6px; } .scrolled .sc3 { width: 115px; height: 1px; margin-left: 9px; background: #006bb4; }
.filters { display: flex; align-items: center; height: 31px; padding-left: 8px; color: #006bb4; font-size: 14px; }
.pill { height: 31px; line-height: 30px; margin-right: 4px; padding: 0 7px; border: 1px solid #bcc2d2; border-radius: 2px; background: #fdfdfe; color: #343741; font-size: 12px; font-weight: 500; letter-spacing: -.11px; box-shadow: 0 1px 1px #d5d9e4; white-space: nowrap; }
.f-ico { width: 18px; height: 18px; margin-left: 11px; fill: none; stroke: #006bb4; stroke-width: 1.100; }
.f-add { margin-left: 14px; }
.add { margin-left: 7px; }
.callout { width: 1830px; height: 106px; margin: 11px 0 0 8px; padding: 16px; border-left: 2px solid #f0a800; background: #fff6e5; font-size: 14px; }
.callout h2 { display: flex; align-items: center; gap: 8px; height: 24px; font-size: 16px; letter-spacing: -.27px; color: #8a6a0a; }
.callout h2 svg { width: 16px; height: 16px; }
.callout p { margin-top: 8px; line-height: 21px; letter-spacing: -.06px; }
.callout a { color: #006bb4; font-weight: 700; }
.card { border: 1px solid #d3dae6; border-radius: 4px; background: #fff; box-shadow: 0 1px 2px #d8dce8; }
.metrics { display: grid; grid-template-columns: repeat(4, 1fr); gap: 8px; width: 1830px; height: 160px; margin: 24px 0 0 8px; }
.metrics .card { display: flex; flex-direction: column; align-items: center; padding-top: 41px; font-size: 16px; }
.metrics strong { font-size: 54.500px; font-weight: 700; line-height: 58px; letter-spacing: -.5px; }
.metrics span { line-height: 24px; margin-top: 2px; letter-spacing: -.04px; }
.green strong { color: #209280; }
.red strong { color: #cc5642; }
.charts { display: grid; grid-template-columns: 1fr 1fr; gap: 8px; width: 1830px; height: 356px; margin: 16px 0 0 8px; }
.chart { padding: 7px 8px 0; min-width: 0; }
.chart h3 { height: 21px; line-height: 20px; font-size: 12px; font-weight: 700; letter-spacing: -.03px; color: #1a1c21; }
.plot { display: flex; height: 312px; }
.legend { list-style: none; padding-top: 12px; font-size: 12px; letter-spacing: -.08px; }
.legend li { display: flex; align-items: center; gap: 6px; height: 24px; }
.legend i { width: 12px; height: 12px; border-radius: 50%; }
.plot svg text { font-family: Inter, sans-serif; font-size: 11px; fill: #7a808c; }
.plot svg text.axis { font-size: 12px; font-weight: 700; fill: #69707d; }
.lower { display: grid; grid-template-columns: 605px 605px 605px; gap: 8px; height: 40px; margin: 8px 0 0 8px; }
.lower .card { border-radius: 4px 4px 0 0; }
.scrollbar { position: absolute; right: 1px; top: 72px; width: 3px; height: 490px; border-radius: 2px; background: #b0b3be; }

/* taskbar */
.taskbar { position: relative; display: flex; align-items: center; height: 59px; border-top: 1px solid #4a444c; background: linear-gradient(90deg, #16191f 0, #18222c 20%, #19252f 27%, #1f1d55 38%, #251c55 42%, #391b42 46%, #3a1a3a 50%, #37144f 57%, #3a1244 64%, #3c123f 78%, #30183a 88%, #2a1a2d 100%); font-family: "Open Sans", sans-serif; }
.start { width: 29px; height: 29px; margin-left: 493px; }
.search { display: flex; align-items: center; gap: 6px; width: 125px; height: 40px; margin-left: 18px; padding-left: 29px; border: 1px solid #35415a; border-radius: 20px; background: #263245; font-size: 14.700px; letter-spacing: -.3px; }
.search svg { width: 18px; height: 18px; }
.apps { display: flex; margin-left: 4.500px; }
.app { position: relative; display: flex; align-items: center; justify-content: center; width: 55px; height: 50px; }
.app svg { width: 30px; height: 30px; }
.app svg.tg { width: 26px; height: 26px; }
.run::after { content: ""; position: absolute; left: 23.500px; bottom: 1px; width: 8px; height: 4px; border-radius: 2px; background: #a090ac; }
.hot { background: linear-gradient(#824548, #7c4048) 2px 0 / 51px 50px no-repeat; border-radius: 6px; }
.hot::after { background: #ff9fa8; }
.hot em { position: absolute; left: 29px; top: 10px; width: 19px; height: 14px; border-radius: 4px; background: #808080; font: 11px/14px "Open Sans", sans-serif; text-align: center; letter-spacing: -.3px; }
.tray { display: flex; align-items: center; height: 58px; margin-left: auto; padding-right: 23px; }
.y1 { width: 14px; height: 8px; }
.y2 { width: 20px; height: 16px; margin-left: 23px; }
.lang { width: 30px; margin-left: 23px; font-size: 14.300px; letter-spacing: -.2px; }
.y3 { width: 20px; height: 16px; margin-left: 22px; }
.y4 { width: 20px; height: 18px; margin-left: 10px; }
.y5 { width: 20px; height: 18px; margin-left: 10px; }
.clock { display: flex; flex-direction: column; align-items: flex-end; width: 93px; font-size: 14.500px; line-height: 20px; letter-spacing: -.2px; }
```
FILE: charts.js
```js
// Cumulative tops of every stacked series, one row per 30 minutes from 10:30.
const groups = {
  names: ['syslog', 'web', 'sshd', 'accesslog', 'recon', 'gcp', 'syscheck', 'wazuh', 'git', 'github'],
  colors: ['#54b399', '#6092c0', '#d36086', '#9170b8', '#ca8eae', '#ee8b74', '#ebdfa8', '#dcd5c5', '#eec39e', '#d6b2aa'],
  opacity: 0.8, max: 35, left: 43.3, step: 14.48, width: 699, labelEvery: [0, 10, 20, 30], ticks: [35, 30, 20, 10, 0],
  rows: `1 2 3 4 4 5 7 7 8 9|3 6 9 10 12 16 19 22 24 26|4 7 11 12 15 17 17 17 18 19|3 6 9 12 14 15 16 17 17 17|6 9 14 17 20 21 23 25 25 25|3 8 11 14 17 18 18 18 20 22|6 8 14 15 16 19 23 27 29 31|3 5 5 5 5 6 6 7 8 9|2 3 5 5 5 5 8 11 12 13|2 6 8 11 12 14 14 14 14 14|4 8 12 13 15 15 15 15 15 15|1 2 3 4 5 6 6 6 8 10|3 4 6 7 8 11 12 13 14 15|1 5 6 8 8 8 8 8 9 10|0 3 3 6 8 8 11 14 15 16|0 2 2 2 2 2 4 6 9 12|0 1 2 4 5 5 7 8 10 12|4 8 12 15 15 15 16 17 18 19|2 6 8 11 12 14 14 14 16 18|4 7 10 11 12 12 16 20 21 22|2 2 2 4 4 6 6 6 6 6|2 4 5 6 7 8 10 11 13 16|4 7 11 13 14 16 19 22 23 24|5 8 13 16 20 20 22 24 25 26|4 8 12 14 18 19 21 23 24 25|2 4 6 8 9 10 11 11 11 11|0 1 1 1 1 3 4 5 5 5|1 7 8 11 12 16 16 16 19 22|2 4 6 7 8 9 11 13 14 15|2 7 9 12 16 21 23 25 26 27|8 11 19 22 27 27 29 31 32 33|2 3 4 5 6 8 10 12 13 16|3 3 6 6 8 11 12 13 14 15|3 5 7 9 12 13 15 17 18 19|2 4 6 8 10 12 14 16 18 20|1 4 4 5 5 6 6 6 8 10|4 8 12 16 21 21 23 25 25 25|2 3 3 4 5 10 13 18 22 25|3 4 5 5 5 8 11 14 17 20|8 13 13 17 20 22 23 24 24 24|5 8 11 12 13 16 17 18 19 20|2 4 6 7 8 10 12 15 17 19|2 3 5 5 6 7 7 8 8 9|0 5 5 9 11 13 13 13 15 17|4 4 8 8 10 11 12 13 15 17|2 5 7 8 10 11 14 17 22 28|8 15 17 21 24 25 26 27 28 29|19 19 20 20 21 21 22 23 24 25`
};
const alerts = {
  names: ['5', '3', '10', '7', '6', '12', '8', '9', '11'],
  colors: ['#7fc6b1', '#87add1', '#df87a5', '#ac92cc', '#d8a8c3', '#e0cd7f', '#cabca3', '#e4a671', '#c18a7f'],
  opacity: 0.8, max: 30, left: 43.3, step: 14.26, width: 699, labelEvery: [0, 5, 10, 15, 20, 25, 30], ticks: [30, 25, 20, 15, 10, 5, 0], edge: true,
  rows: `1 3 4 4 5 6 6 7 7|6 12 12 13 15 17 18 18 18|4 5 6 8 8 8 10 10 11|3 3 4 5 6 7 8 8 8|5 8 11 12 15 15 15 15 15|6 9 10 10 11 12 13 13 13|7 9 10 15 15 15 16 18 19|5 5 6 6 6 7 7 8 8|4 5 5 7 7 7 7 8 8|6 6 8 8 9 10 10 10 10|3 5 8 8 9 9 10 10 10|3 5 7 7 8 8 8 8 8|3 6 7 8 8 9 9 10 11|4 5 6 6 7 7 7 7 7|2 3 5 7 9 9 9 10 10|5 6 6 8 10 10 10 11 11|1 3 5 7 9 9 9 9 9|8 9 9 10 12 12 12 12 12|4 6 9 9 11 11 11 13 13|4 5 9 12 12 13 13 13 13|3 5 5 6 7 8 8 8 8|3 5 6 8 8 9 10 10 10|5 8 12 13 14 14 14 14 14|3 4 8 9 11 11 12 12 12|8 10 11 12 13 14 16 16 16|3 3 4 4 5 6 6 6 6|1 3 3 4 4 5 5 5 5|9 12 13 13 14 16 16 16 16|3 5 6 8 8 8 9 9 9|5 7 11 13 15 16 16 17 17|3 5 9 10 12 13 15 15 15|3 5 6 7 7 9 9 10 10|3 3 3 4 7 8 8 9 9|2 3 6 8 10 10 10 11 11|2 3 3 6 6 7 9 9 10|6 8 8 8 8 8 8 8 8|2 2 7 8 10 10 11 11 11|6 8 9 12 12 13 13 15 15|7 8 8 9 9 12 13 13 13|4 15 18 25 25 25 25 27 27|6 7 8 9 11 13 13 14 14|6 8 8 10 11 12 12 12 12|3 4 5 5 8 9 9 9 9|5 7 9 9 9 11 11 11 11|4 7 7 7 10 10 12 12 12|8 10 11 13 16 16 17 17 18|7 16 19 25 26 26 27 27 28|0 24 25 28 28 29 30 30 30|0 0 0 0 0 0 0 0 0`
};

const TOP = 22, HEIGHT = 246;

// Cardinal spline through the points, as bezier segments.
function curve(pts) {
  const f = n => n.toFixed(2);
  let d = '';
  for (let i = 1; i < pts.length; i++) {
    const a = pts[i - 1], b = pts[i], p = pts[i - 2] || a, n = pts[i + 1] || b;
    d += `C${f(a[0] + 0.15 * (b[0] - p[0]))} ${f(a[1] + 0.15 * (b[1] - p[1]))} ${f(b[0] - 0.15 * (n[0] - a[0]))} ${f(b[1] - 0.15 * (n[1] - a[1]))} ${f(b[0])} ${f(b[1])}`;
  }
  return d;
}

function draw(id, c) {
  const rows = c.rows.split('|').map(r => r.split(' ').map(Number));
  const base = TOP + HEIGHT;
  const x = i => c.left + i * c.step;
  const y = v => base - v * HEIGHT / c.max;
  const right = c.left + c.width;
  let grid = '', areas = '', axes = '';
  for (let v = 5; v <= c.max; v += 5) grid += `<path d="M${c.left} ${y(v)}H${right}"/>`;
  for (let i = 5; i < rows.length; i += 6) grid += `<path d="M${x(i)} ${TOP}V${base}"/>`;
  c.names.forEach((_, k) => {
    const up = rows.map((r, i) => [x(i), y(r[k])]);
    const down = rows.map((r, i) => [x(i), y(k ? r[k - 1] : 0)]).reverse();
    const line = `M${up[0]}${curve(up)}`;
    areas += `<path d="${line}L${down[0]}${curve(down)}Z" fill="${c.colors[k]}" fill-opacity="${c.opacity}"/><path d="${line}" fill="none" stroke="${c.colors[k]}" stroke-width="1.1"/>`;
  });
  c.ticks.forEach(v => { axes += `<path d="M${c.left - 6} ${y(v)}h6"/>`; });
  let labels = '';
  c.labelEvery.forEach(v => { labels += `<text x="${c.left - 9}" y="${y(v) + 3}" text-anchor="end">${v}</text>`; });
  ['12:00', '15:00', '18:00', '21:00', '00:00', '03:00', '06:00', '09:00'].forEach((t, k) => {
    const tx = x(3 + k * 6);
    axes += `<path d="M${tx} ${base}v5"/>`;
    labels += `<text x="${tx - 0.5}" y="${base + 17}" text-anchor="middle">${t}</text>`;
  });
  document.getElementById(id).innerHTML = `
    <clipPath id="${id}Clip"><rect x="${c.left}" y="${TOP}" width="${c.width}" height="${HEIGHT}"/></clipPath>
    <g clip-path="url(#${id}Clip)">${areas}</g>
    <g stroke="#343741" stroke-opacity=".1" stroke-width="1.3" fill="none">${grid}</g>
    <rect x="${c.left}" y="${TOP}" width="3.5" height="${HEIGHT}" fill="#000" fill-opacity=".1"/>
    ${c.edge ? `<rect x="${right - 11}" y="${TOP}" width="11" height="${HEIGHT}" fill="#000" fill-opacity=".1"/>` : ''}
    <g stroke="#d5d7dc" fill="none"><path d="M${c.left} ${TOP}V${base + 5}M${c.left} ${base}H${right}v5"/>${axes}</g>
    ${labels}
    <text class="axis" x="${c.left + c.width / 2 - 1}" y="${base + 35}" text-anchor="middle">timestamp per 30 minutes</text>
    <text class="axis" transform="translate(10 ${TOP + HEIGHT / 2}) rotate(-90)" text-anchor="middle">Count</text>`;
  document.getElementById(id + 'Legend').innerHTML = c.names
    .map((n, k) => `<li><i style="background:${c.colors[k]}"></i>${n}</li>`).join('');
}
draw('groups', groups);
draw('alerts', alerts);

// Load history in the panel, one bar per pixel.
const load = [12, 12, 1, 0, 0, 1, 0, 0, 0, 1, 8, 15, 17, 10, 17, 17, 10, 0, 0, 8, 7, 4, 0, 0, 0, 1, 0, 0, 0, 1, 1, 10, 18, 14, 10, 3, 12, 14, 3, 8, 13, 15, 14, 4, 2, 2, 1, 0, 1, 1, 5, 12, 14, 7, 12, 8, 11, 5, 8, 9, 3, 10, 1, 0, 10, 13, 18, 21, 20, 22, 23, 20, 20, 22, 23, 23, 20, 17, 15, 11, 6, 6, 15, 5, 4, 4, 14, 13, 4, 5, 5, 13, 8, 2, 0, 0, 0, 1, 0, 0, 23, 21, 18, 18, 17, 2, 1, 0, 1, 3, 5, 6, 7, 6, 0, 0, 0, 1, 0, 0, 1, 0, 0, 1, 1, 1];
document.getElementById('cpu').innerHTML = load
  .map((h, i) => h ? `<rect x="${i}" y="${24 - h}" width="1" height="${h}" fill="url(#gCpu)"/>` : '').join('');
```
